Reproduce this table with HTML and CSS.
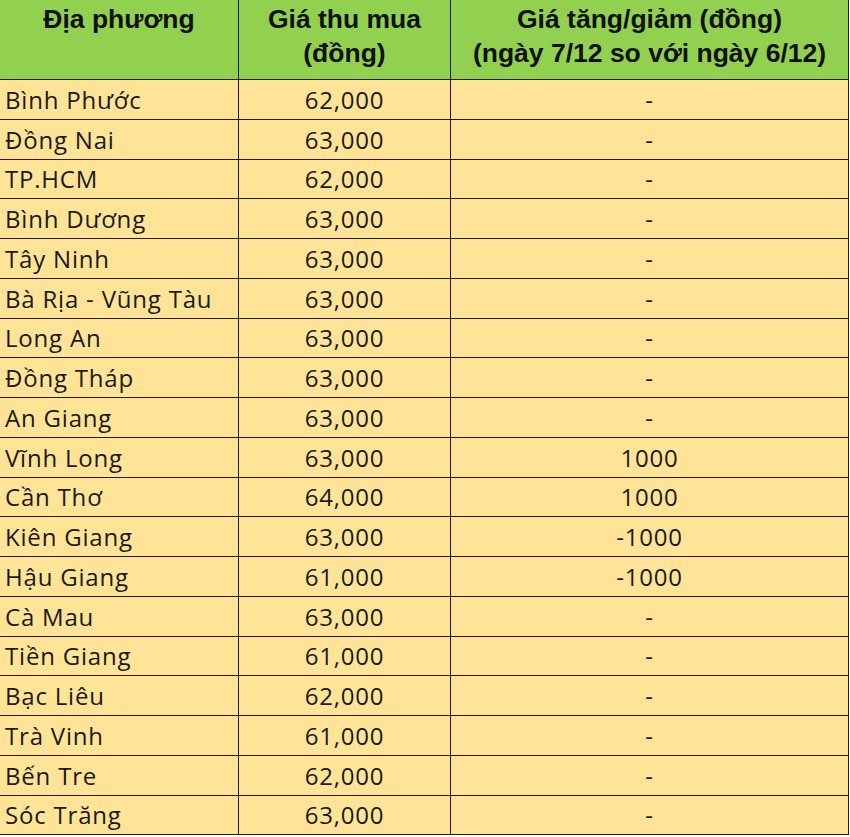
FILE: index.html
```html
<!DOCTYPE html>
<html lang="vi">
<head>
<meta charset="utf-8">
<title>Giá thu mua</title>
<link rel="stylesheet" href="styles.css">
</head>
<body>
<div class="table">
  <div class="cell head">Địa phương</div>
  <div class="cell head">Giá thu mua<br>(đồng)</div>
  <div class="cell head">Giá tăng/giảm (đồng)<br>(ngày 7/12 so với ngày 6/12)</div>

  <div class="cell name">Bình Phước</div><div class="cell num">62,000</div><div class="cell num">-</div>
  <div class="cell name">Đồng Nai</div><div class="cell num">63,000</div><div class="cell num">-</div>
  <div class="cell name">TP.HCM</div><div class="cell num">62,000</div><div class="cell num">-</div>
  <div class="cell name">Bình Dương</div><div class="cell num">63,000</div><div class="cell num">-</div>
  <div class="cell name">Tây Ninh</div><div class="cell num">63,000</div><div class="cell num">-</div>
  <div class="cell name">Bà Rịa - Vũng Tàu</div><div class="cell num">63,000</div><div class="cell num">-</div>
  <div class="cell name">Long An</div><div class="cell num">63,000</div><div class="cell num">-</div>
  <div class="cell name">Đồng Tháp</div><div class="cell num">63,000</div><div class="cell num">-</div>
  <div class="cell name">An Giang</div><div class="cell num">63,000</div><div class="cell num">-</div>
  <div class="cell name">Vĩnh Long</div><div class="cell num">63,000</div><div class="cell num">1000</div>
  <div class="cell name">Cần Thơ</div><div class="cell num">64,000</div><div class="cell num">1000</div>
  <div class="cell name">Kiên Giang</div><div class="cell num">63,000</div><div class="cell num">-1000</div>
  <div class="cell name">Hậu Giang</div><div class="cell num">61,000</div><div class="cell num">-1000</div>
  <div class="cell name">Cà Mau</div><div class="cell num">63,000</div><div class="cell num">-</div>
  <div class="cell name">Tiền Giang</div><div class="cell num">61,000</div><div class="cell num">-</div>
  <div class="cell name">Bạc Liêu</div><div class="cell num">62,000</div><div class="cell num">-</div>
  <div class="cell name">Trà Vinh</div><div class="cell num">61,000</div><div class="cell num">-</div>
  <div class="cell name">Bến Tre</div><div class="cell num">62,000</div><div class="cell num">-</div>
  <div class="cell name">Sóc Trăng</div><div class="cell num">63,000</div><div class="cell num">-</div>
</div>
</body>
</html>
```

FILE: styles.css
```css
html, body {
  margin: 0;
  padding: 0;
  background: #ffffff;
}

.table {
  display: grid;
  width: 849px;
  box-sizing: border-box;
  grid-template-columns: 238px 211px 397px;
  grid-template-rows: 79px;
  grid-auto-rows: 38.75px;
  gap: 1px;
  padding: 0 1px 1px 0;
  background: #1e1e1e;
}

.cell {
  background: #ffe497;
  color: #1a1a1a;
  font-family: "Open Sans", "Noto Sans", sans-serif;
  font-size: 24px;
  letter-spacing: 0.8px;
  display: flex;
  align-items: center;
  white-space: nowrap;
  overflow: hidden;
}

.head {
  background: #92d050;
  color: #111111;
  font-family: "Liberation Sans", Arial, sans-serif;
  font-weight: bold;
  font-size: 26.5px;
  letter-spacing: 0;
  line-height: 34px;
  text-align: center;
  justify-content: center;
  align-items: flex-start;
  padding-top: 2px;
}

.name {
  padding-left: 5px;
}

.num {
  justify-content: center;
}
```
